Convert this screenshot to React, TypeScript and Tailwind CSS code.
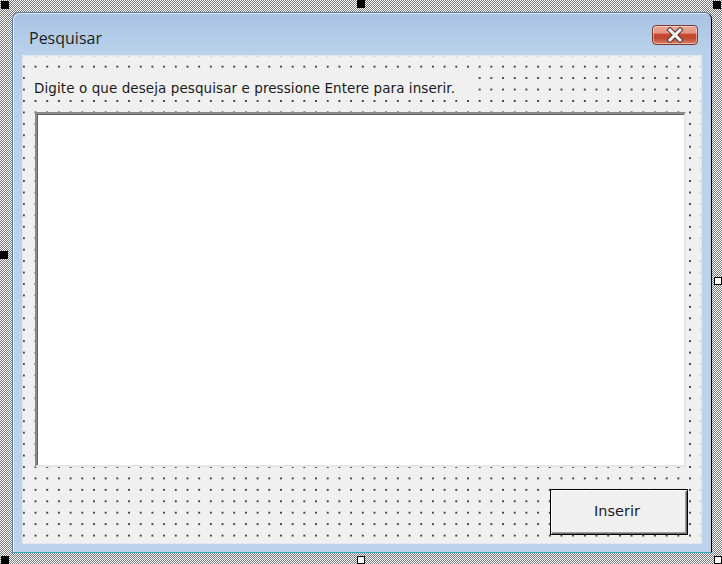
import React from "react";

function Handle({ cls, white }: { cls: string; white?: boolean }) {
  return (
    <div
      className={
        "absolute w-[8px] h-[8px] border border-black " +
        (white ? "bg-white " : "bg-black ") +
        cls
      }
    />
  );
}

function CloseButton() {
  return (
    <div className="relative w-[46px] h-[20px] rounded-[4px] border border-[#7a3a2f] overflow-hidden shadow-[inset_0_0_0_1px_rgba(255,255,255,0.45)] bg-[linear-gradient(#eba899_0%,#e39482_40%,#c8462f_45%,#c24a33_70%,#d9826b_100%)] flex items-center justify-center">
      <svg width="22" height="16" viewBox="0 0 22 16">
        <path d="M6 3 L16 13 M16 3 L6 13" stroke="#5a3a35" strokeWidth="5" strokeLinecap="square" />
        <path d="M6 3 L16 13 M16 3 L6 13" stroke="#f4f4f4" strokeWidth="3" strokeLinecap="square" />
      </svg>
    </div>
  );
}

export default function App() {
  return (
    <div className="relative w-[722px] h-[564px] overflow-hidden bg-[repeating-conic-gradient(#7a7a7a_0_25%,#ffffff_0_50%)] bg-[size:2px_2px] font-['Liberation_Sans',Arial,sans-serif]">
      <div className="pt-[12px] pl-[12px]">
        <div className="w-[700px] h-[541px] flex flex-col rounded-t-[7px] border border-[#5d7ea8] border-r-black border-b-[#31a9cc] bg-[linear-gradient(#a9c3e3_0px,#b9d1ea_40px,#bcd3eb_100%)] shadow-[inset_1px_1px_0_rgba(255,255,255,0.6)]">
          <div className="h-[42px] shrink-0 flex items-center justify-between pl-[16px] pr-[13px]">
            <span className="text-[16px] text-[#1e1e1e] font-['Open_Sans','Liberation_Sans',sans-serif] mt-[7px]">Pesquisar</span>
            <div className="mt-[2px]">
              <CloseButton />
            </div>
          </div>
          <div className="flex-1 mx-[9px] mb-[8px] bg-[#f0f0f0] border border-[#dfe8f2] bg-[radial-gradient(circle,#444_0.7px,transparent_1.1px)] bg-[size:11.7px_11.45px] bg-[position:-5px_-6.5px] flex flex-col">
            <div className="ml-[7px] mt-[20px] w-[448px] h-[21px] bg-[#f0f0f0] flex items-center pl-[4px] pt-[3px] text-[13.5px] text-[#1a1a1a] font-['DejaVu_Sans',sans-serif] tracking-[0.08px] whitespace-nowrap">
              Digite o que deseja pesquisar e pressione Entere para inserir.
            </div>
            <div className="ml-[12px] mt-[15px] w-[651px] h-[355px] bg-white border-2 border-t-[#8a8a8a] border-l-[#8a8a8a] border-r-[#e6e6e6] border-b-[#e6e6e6] shadow-[inset_1px_1px_0_#606060]" />
            <div className="flex justify-end pr-[13px] mt-[22px]">
              <div className="w-[138px] h-[46px] border border-black bg-[#f0f0f0] shadow-[inset_1px_1px_0_#ffffff,inset_-1px_-1px_0_#696969,inset_-2px_-2px_0_#a0a0a0] flex items-center justify-center pr-[4px] text-[14.5px] text-[#1a1a1a] font-['DejaVu_Sans',sans-serif]">
                Inserir
              </div>
            </div>
          </div>
        </div>
      </div>
      <Handle cls="left-[1px] top-[1px]" />
      <Handle cls="left-[357px] top-0" />
      <Handle cls="right-[1px] top-[1px]" />
      <Handle cls="left-0 top-[251px]" />
      <Handle cls="right-0 top-[277px]" white />
      <Handle cls="left-[1px] bottom-0" />
      <Handle cls="left-[357px] bottom-0" white />
      <Handle cls="right-0 bottom-0" white />
    </div>
  );
}
